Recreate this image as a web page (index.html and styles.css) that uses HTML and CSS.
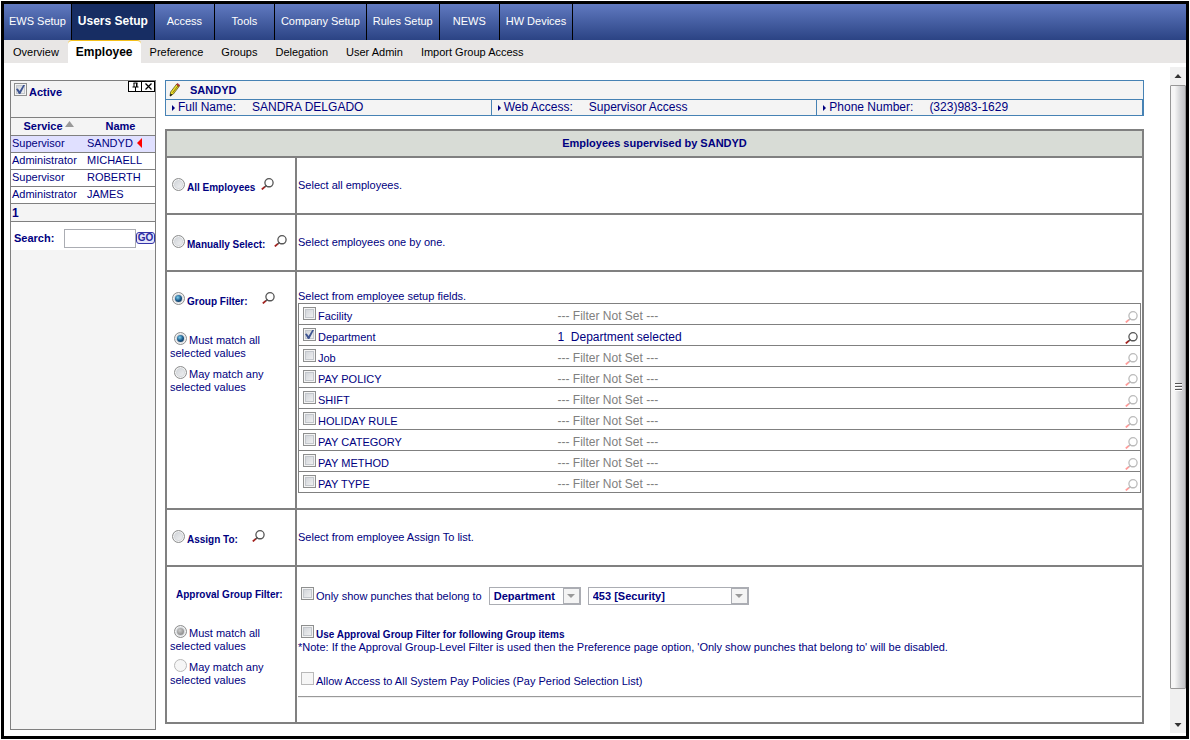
FILE: index.html
```html
<!DOCTYPE html>
<html lang="en">
<head>
    <meta charset="UTF-8">
    <title>Users Setup - Employee</title>
    <link rel="stylesheet" href="styles.css">
</head>
<body>
<svg class="sprite" aria-hidden="true">
    <symbol id="lens" viewBox="0 0 13 12">
        <path class="handle" d="M.8 11.4 L4 8.6" stroke-width="1.8"/>
        <path class="rim" d="M3.600 9 L5.6 7.4" stroke-width="1.6"/>
        <circle class="rim" cx="8" cy="4.800" r="4.100" fill="none" stroke-width="1.300"/>
        <path class="rim" d="M6 8.600 h4" stroke-width="1"/>
    </symbol>
</svg>

<div class="frame">
    <nav class="tabs">
        <a href="#">EWS Setup</a>
        <a href="#" class="current">Users Setup</a>
        <a href="#">Access</a>
        <a href="#">Tools</a>
        <a href="#">Company Setup</a>
        <a href="#">Rules Setup</a>
        <a href="#">NEWS</a>
        <a href="#">HW Devices</a>
    </nav>
    <nav class="subtabs">
        <a href="#">Overview</a>
        <a href="#" class="current">Employee</a>
        <a href="#">Preference</a>
        <a href="#">Groups</a>
        <a href="#">Delegation</a>
        <a href="#">User Admin</a>
        <a href="#">Import Group Access</a>
    </nav>

    <div class="content">
        <aside class="sidebar">
            <div class="side-head">
                <input type="checkbox" id="active" checked>
                <label for="active">Active</label>
                <div class="side-tools">
                    <button type="button" aria-label="Pin">
                        <svg width="9" height="9" viewBox="0 0 9 9"><path d="M2.5 1h4M3 1v4M5.5 1v4M6 1v4M1.5 5h6M4.5 5v4" fill="none" stroke="#000" stroke-width="1"/></svg>
                    </button>
                    <button type="button" aria-label="Close">
                        <svg width="9" height="9" viewBox="0 0 9 9"><path d="M1.500 1.500l6 6M7.500 1.500l-6 6" fill="none" stroke="#000" stroke-width="1.300"/></svg>
                    </button>
                </div>
            </div>
            <table class="users">
                <thead>
                    <tr>
                        <th class="service">Service<svg class="sort" width="9" height="6" viewBox="0 0 9 6"><path d="M4.500 0L9 6H0z" fill="#999"/></svg></th>
                        <th>Name</th>
                    </tr>
                </thead>
                <tbody>
                    <tr class="selected"><td>Supervisor</td><td>SANDYD <svg class="mark" width="5" height="10" viewBox="0 0 5 10"><path d="M5 0v10L0 5z" fill="#f00"/></svg></td></tr>
                    <tr><td>Administrator</td><td>MICHAELL</td></tr>
                    <tr><td>Supervisor</td><td>ROBERTH</td></tr>
                    <tr><td>Administrator</td><td>JAMES</td></tr>
                </tbody>
            </table>
            <div class="pager">1</div>
            <form class="search">
                <label for="search">Search:</label>
                <input type="text" id="search">
                <button type="button">GO</button>
            </form>
        </aside>

        <main class="main">
            <div class="user">
                <div class="user-name">
                    <svg width="11" height="14" viewBox="0 0 11 14">
                        <path d="M1 13l.6-4L7.4 1.4l2.8 2L4.4 11z" fill="#efe02a" stroke="#4a4410" stroke-width=".7"/>
                        <path d="M7.4 1.4L8.4.4l2.4 1.8-.8 1.2z" fill="#c33" stroke="#611" stroke-width=".5"/>
                        <path d="M3.600 9.800L9 2.800" stroke="#8a7a10" stroke-width="1"/>
                        <path d="M1 13.400l.5-3 1.900 1.400z" fill="#111"/>
                    </svg>
                    SANDYD
                </div>
                <div class="user-info">
                    <div><i class="bullet"></i>Full Name:<span>SANDRA DELGADO</span></div>
                    <div><i class="bullet"></i>Web Access:<span>Supervisor Access</span></div>
                    <div><i class="bullet"></i>Phone Number:<span>(323)983-1629</span></div>
                </div>
            </div>

            <table class="rules">
                <tr><th colspan="2">Employees supervised by SANDYD</th></tr>
                <tr class="row">
                    <td class="side">
                        <div class="mode">
                            <input type="radio" name="mode" id="all">
                            <label for="all">All Employees</label>
                            <button type="button" class="lens" aria-label="View all employees"><svg><use href="#lens"/></svg></button>
                        </div>
                    </td>
                    <td>Select all employees.</td>
                </tr>
                <tr class="row">
                    <td class="side">
                        <div class="mode">
                            <input type="radio" name="mode" id="manual">
                            <label for="manual">Manually Select:&nbsp;</label>
                            <button type="button" class="lens" aria-label="View selected employees"><svg><use href="#lens"/></svg></button>
                        </div>
                    </td>
                    <td>Select employees one by one.</td>
                </tr>
                <tr class="row-filter">
                    <td class="side">
                        <div class="mode">
                            <input type="radio" name="mode" id="group" checked>
                            <label for="group">Group Filter:&nbsp;&nbsp;&nbsp;</label>
                            <button type="button" class="lens" aria-label="View group filter"><svg><use href="#lens"/></svg></button>
                        </div>
                        <div class="match">
                            <p><input type="radio" name="match" id="match-all" checked><label for="match-all">Must match all selected values</label></p>
                            <p><input type="radio" name="match" id="match-any"><label for="match-any">May match any selected values</label></p>
                        </div>
                    </td>
                    <td>
                        Select from employee setup fields.
                        <table class="fields">
                            <tr>
                                <td><input type="checkbox" id="f1"><label for="f1">Facility</label></td>
                                <td>--- Filter Not Set ---</td>
                                <td><button type="button" class="lens" disabled aria-label="Facility"><svg><use href="#lens"/></svg></button></td>
                            </tr>
                            <tr class="set">
                                <td><input type="checkbox" id="f2" checked><label for="f2">Department</label></td>
                                <td>1&nbsp; Department selected</td>
                                <td><button type="button" class="lens" aria-label="Department"><svg><use href="#lens"/></svg></button></td>
                            </tr>
                            <tr>
                                <td><input type="checkbox" id="f3"><label for="f3">Job</label></td>
                                <td>--- Filter Not Set ---</td>
                                <td><button type="button" class="lens" disabled aria-label="Job"><svg><use href="#lens"/></svg></button></td>
                            </tr>
                            <tr>
                                <td><input type="checkbox" id="f4"><label for="f4">PAY POLICY</label></td>
                                <td>--- Filter Not Set ---</td>
                                <td><button type="button" class="lens" disabled aria-label="Pay policy"><svg><use href="#lens"/></svg></button></td>
                            </tr>
                            <tr>
                                <td><input type="checkbox" id="f5"><label for="f5">SHIFT</label></td>
                                <td>--- Filter Not Set ---</td>
                                <td><button type="button" class="lens" disabled aria-label="Shift"><svg><use href="#lens"/></svg></button></td>
                            </tr>
                            <tr>
                                <td><input type="checkbox" id="f6"><label for="f6">HOLIDAY RULE</label></td>
                                <td>--- Filter Not Set ---</td>
                                <td><button type="button" class="lens" disabled aria-label="Holiday rule"><svg><use href="#lens"/></svg></button></td>
                            </tr>
                            <tr>
                                <td><input type="checkbox" id="f7"><label for="f7">PAY CATEGORY</label></td>
                                <td>--- Filter Not Set ---</td>
                                <td><button type="button" class="lens" disabled aria-label="Pay category"><svg><use href="#lens"/></svg></button></td>
                            </tr>
                            <tr>
                                <td><input type="checkbox" id="f8"><label for="f8">PAY METHOD</label></td>
                                <td>--- Filter Not Set ---</td>
                                <td><button type="button" class="lens" disabled aria-label="Pay method"><svg><use href="#lens"/></svg></button></td>
                            </tr>
                            <tr>
                                <td><input type="checkbox" id="f9"><label for="f9">PAY TYPE</label></td>
                                <td>--- Filter Not Set ---</td>
                                <td><button type="button" class="lens" disabled aria-label="Pay type"><svg><use href="#lens"/></svg></button></td>
                            </tr>
                        </table>
                    </td>
                </tr>
                <tr class="row">
                    <td class="side">
                        <div class="mode">
                            <input type="radio" name="mode" id="assign">
                            <label for="assign">Assign To:&nbsp;&nbsp;&nbsp;</label>
                            <button type="button" class="lens" aria-label="View assign to list"><svg><use href="#lens"/></svg></button>
                        </div>
                    </td>
                    <td>Select from employee Assign To list.</td>
                </tr>
                <tr class="row-approval">
                    <td class="side">
                        <div class="approval-title">Approval Group Filter:</div>
                        <div class="match">
                            <p><input type="radio" name="approval" id="ap-all" checked disabled><label for="ap-all">Must match all selected values</label></p>
                            <p><input type="radio" name="approval" id="ap-any" disabled><label for="ap-any">May match any selected values</label></p>
                        </div>
                    </td>
                    <td>
                        <div class="option punches">
                            <span><input type="checkbox" id="punches"><label for="punches">Only show punches that belong to</label></span>
                            <span class="pick">
                                <select disabled aria-label="Group type"><option>Department</option></select>
                                <i></i>
                            </span>
                            <span class="pick pick-wide">
                                <select disabled aria-label="Group"><option>453 [Security]</option></select>
                                <i></i>
                            </span>
                        </div>
                        <div class="option use-filter">
                            <input type="checkbox" id="use"><label for="use">Use Approval Group Filter for following Group items</label>
                        </div>
                        <div class="note">*Note: If the Approval Group-Level Filter is used then the Preference page option, 'Only show punches that belong to' will be disabled.</div>
                        <div class="option policies">
                            <input type="checkbox" id="policies" disabled><label for="policies">Allow Access to All System Pay Policies (Pay Period Selection List)</label>
                        </div>
                        <hr>
                    </td>
                </tr>
            </table>
        </main>

        <div class="scrollbar" aria-hidden="true">
            <svg width="15" height="18" viewBox="0 0 15 18"><path d="M8 7l3.500 4h-7z" fill="#333"/></svg>
            <div class="thumb"><i></i><i></i><i></i></div>
            <svg width="15" height="18" viewBox="0 0 15 18"><path d="M8 12L4.500 8h7z" fill="#333"/></svg>
        </div>
    </div>
</div>
</body>
</html>
```
FILE: styles.css
```css
* {
    box-sizing: border-box;
}

body {
    margin: 0;
    background: #fff;
    color: #000080;
    font-family: "Liberation Sans", Arial, sans-serif;
    font-size: 11px;
    line-height: 13px;
}

a {
    text-decoration: none;
}

p {
    margin: 0;
}

table {
    border-collapse: collapse;
    width: 100%;
}

th, td {
    padding: 0;
    text-align: left;
}

button {
    margin: 0;
    padding: 0;
    border: 0;
    background: none;
    font-family: inherit;
}

.sprite {
    display: none;
}

.frame {
    display: flex;
    flex-direction: column;
    min-height: calc(100vh - 2px);
    margin: 1px;
    border: 3px solid #000;
}

/* top navigation */
.tabs {
    display: flex;
    height: 36px;
    background: linear-gradient(#6079c0, #2b4384);
}

.tabs a {
    min-width: 60px;
    padding: 0 5px;
    border-right: 1px solid #000;
    color: #fff;
    line-height: 35px;
    text-align: center;
}

.tabs a + a {
    padding: 0 6px;
}

.tabs .current {
    background: #172d63;
    font-size: 12px;
    font-weight: bold;
}

.subtabs {
    display: flex;
    height: 23px;
    background: #e8e6e5;
}

.subtabs a {
    padding: 0 9px;
    color: #000;
    line-height: 24px;
}

.subtabs .current {
    padding: 0 8px;
    border-top: 1px solid #f5c01a;
    border-radius: 4px 4px 0 0;
    background: #fff;
    font-size: 12px;
    font-weight: bold;
    line-height: 22px;
}

/* check boxes and radios */
input[type="checkbox"], input[type="radio"] {
    appearance: none;
    display: inline-block;
    flex: none;
    width: 13px;
    height: 13px;
    margin: 0;
    border: 1px solid #8e8f8f;
    background: linear-gradient(135deg, #cbcfd5, #f6f6f6);
    box-shadow: inset 0 0 0 1px #f4f4f4, inset 0 0 0 2px #c3c7cc;
}

input[type="checkbox"]:checked::after {
    content: "";
    display: block;
    width: 9px;
    height: 9px;
    margin: 1px;
    background: #3f5592;
    clip-path: polygon(0 45%, 20% 38%, 40% 66%, 80% 0, 100% 0, 48% 100%, 32% 100%);
}

input[type="radio"] {
    border-radius: 50%;
    box-shadow: inset 0 0 0 1px #f4f4f4, inset 0 0 0 2px #d5d8dc;
}

input[type="radio"]:checked::after {
    content: "";
    display: block;
    width: 7px;
    height: 7px;
    margin: 2px;
    border-radius: 50%;
    background: radial-gradient(circle at 40% 35%, #7fd0ee, #1a5a8c 50%, #0b2440);
}

input[type="radio"]:checked:disabled::after {
    background: radial-gradient(circle at 40% 35%, #ccc, #777);
}

input:disabled:not(:checked) {
    border-color: #b9b9b9;
    background: #f6f6f6;
    box-shadow: none;
}

.lens {
    display: block;
    width: 13px;
    height: 12px;
}

.lens svg {
    display: block;
    width: 13px;
    height: 12px;
}

.handle {
    stroke: #a3221f;
}

.rim {
    stroke: #555;
}

.lens:disabled {
    opacity: .4;
}

.lens:disabled svg {
    filter: saturate(2);
}

.content {
    display: flex;
    flex: 1;
    padding: 4px 0 3px 6px;
}

/* user list */
.sidebar {
    width: 146px;
    margin: 13px 0 3px;
    border: 1px solid #808080;
    background: #f4f4f4;
}

.side-head {
    display: flex;
    align-items: flex-start;
    height: 37px;
    padding-left: 3px;
    border-bottom: 1px solid #808080;
}

.side-head input {
    margin-top: 2px;
}

.side-head label {
    padding: 5px 0 0 2px;
    font-weight: bold;
}

.side-tools {
    display: flex;
    margin-left: auto;
}

.side-tools button {
    display: grid;
    place-items: center;
    width: 14px;
    height: 11px;
    margin-left: -1px;
    border: 1px solid #000;
    background: #fff;
}

.users th {
    height: 17px;
    text-align: center;
}

.users .service {
    width: 75px;
}

.users tr {
    border-bottom: 1px solid #808080;
}

.users td {
    height: 17px;
    padding-left: 1px;
}

.users tbody tr {
    background: #fff;
}

.users tbody .selected {
    background: #e0e0ff;
}

.sort {
    margin-left: 2px;
    vertical-align: 3px;
}

.mark {
    margin-left: 1px;
    vertical-align: -1px;
}

.pager {
    height: 18px;
    padding-left: 1px;
    border-bottom: 1px solid #808080;
    font-size: 12px;
    font-weight: bold;
    line-height: 18px;
}

.search {
    display: flex;
    align-items: center;
    height: 28px;
    padding: 7px 0 2px 3px;
    background: #fff;
}

.search label {
    flex: 1;
    font-weight: bold;
}

.search input {
    width: 72px;
    height: 19px;
    border: 1px solid #abadb3;
    background: #fff;
}

.search button {
    width: 19px;
    height: 12px;
    border: 1px solid #3434a8;
    border-radius: 3px;
    background: #e6e6fa;
    color: #2a2aa0;
    font-size: 10px;
    font-weight: bold;
    line-height: 10px;
}

/* selected user */
.main {
    flex: 1;
    padding: 13px 26px 0 9px;
}

.user {
    margin-bottom: 13px;
    border: 1px solid #4682b4;
    background: #f4f4f4;
}

.user-name {
    display: flex;
    align-items: center;
    gap: 10px;
    height: 18px;
    padding-left: 3px;
    font-weight: bold;
}

.user-info {
    display: grid;
    grid-template-columns: repeat(3, 1fr);
    border-top: 1px solid #4682b4;
    font-size: 12px;
    line-height: 15px;
}

.user-info div {
    display: flex;
    align-items: center;
    padding-left: 6px;
    border-right: 1px solid #4682b4;
}

.user-info span {
    margin-left: 16px;
}

.bullet {
    margin-right: 3px;
    border: 3px solid transparent;
    border-left: 3px solid #000080;
    border-right: 0;
}

/* supervised employees */
.rules th, .rules > tbody > tr > td {
    border: 2px solid #808080;
}

.rules th {
    height: 27px;
    background: #d8dcd6;
    text-align: center;
}

.rules > tbody > tr > td {
    padding: 0 1px;
}

.rules > tbody > tr > .side {
    width: 130px;
    padding: 0;
}

.row > td {
    height: 57px;
}

.row-filter > td {
    height: 238px;
    vertical-align: top;
}

.row-approval > td {
    height: 157px;
    vertical-align: top;
}

.mode {
    display: flex;
    align-items: flex-start;
    padding-left: 5px;
}

.mode label {
    padding: 3px 6px 0 2px;
    font-size: 10px;
    font-weight: bold;
}

.row-filter .mode {
    padding-top: 20px;
}

.match {
    padding: 24px 0 0 3px;
}

.match p {
    margin-bottom: 6px;
}

.match input {
    margin: 0 2px 0 4px;
    vertical-align: -1px;
}

.rules > tbody > .row-filter > td:last-child {
    padding-top: 18px;
}

.fields {
    border: 1px solid #808080;
}

.fields tr {
    border-bottom: 1px solid #808080;
}

.fields td {
    height: 21px;
    padding: 3px 0 0;
    vertical-align: baseline;
}

.fields td:nth-child(1) {
    width: 259px;
    padding-left: 4px;
}

.fields td:nth-child(2) {
    color: #808080;
    font-size: 12px;
}

.fields td:nth-child(3) {
    width: 16px;
    padding: 0 2px 1px 0;
    vertical-align: bottom;
}

.fields .set td {
    color: #000080;
}

.fields input, .option input {
    margin-right: 2px;
    vertical-align: baseline;
}

.approval-title {
    padding: 21px 0 0 9px;
    font-size: 10px;
    font-weight: bold;
}

.option {
    padding-left: 3px;
}

.punches {
    display: flex;
    gap: 7px;
    padding-top: 20px;
}

.use-filter {
    padding-top: 20px;
    font-size: 10px;
    font-weight: bold;
}

.policies {
    padding-top: 18px;
}

.pick {
    display: flex;
    width: 92px;
    height: 18px;
    border: 1px solid #abadb3;
}

.pick-wide {
    width: 161px;
}

.pick select {
    appearance: none;
    flex: 1;
    min-width: 0;
    padding: 0 0 0 4px;
    border: 0;
    background: #fff;
    color: #000080;
    font-family: inherit;
    font-size: 11px;
    font-weight: bold;
    opacity: 1;
}

.pick i {
    display: grid;
    place-items: center;
    width: 17px;
    border: 1px solid #abadb3;
    background: #f4f4f4;
}

.pick i::after {
    content: "";
    border: 4px solid transparent;
    border-top-color: #999;
    border-bottom: 0;
}

hr {
    margin: 8px 0 0;
    border: 0;
    border-top: 1px solid #999;
    border-bottom: 1px solid #eee;
}

/* page scroll bar */
.scrollbar {
    display: flex;
    flex-direction: column;
    width: 16px;
    background: #f0f0f0;
}

.thumb {
    display: flex;
    flex: 1;
    flex-direction: column;
    align-items: center;
    justify-content: center;
    gap: 1px;
    margin-bottom: 26px;
    border: 1px solid #979797;
    border-radius: 1px;
    background: linear-gradient(to right, #f6f6f6 25%, #d9dadc 60%, #c2c3c6);
}

.thumb i {
    width: 7px;
    height: 2px;
    border-top: 1px solid #555;
    background: #fff;
}
```
